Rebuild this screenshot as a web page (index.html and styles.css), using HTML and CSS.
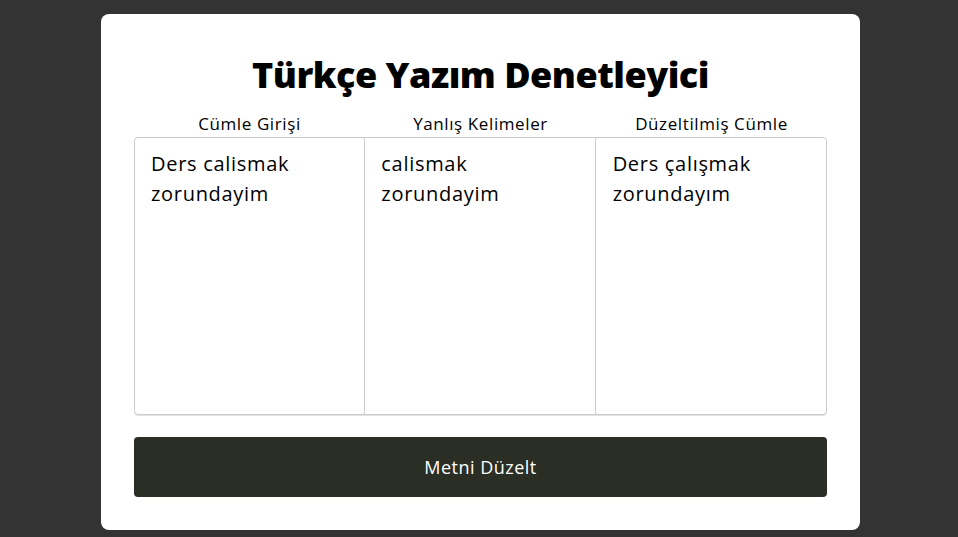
FILE: index.html
```html
<!DOCTYPE html>
<html lang="tr">
<head>
<meta charset="utf-8">
<title>Türkçe Yazım Denetleyici</title>
<link rel="stylesheet" href="styles.css">
</head>
<body>
<main class="card">
  <h1 class="title">Türkçe Yazım Denetleyici</h1>
  <div class="labels">
    <span class="label">Cümle Girişi</span>
    <span class="label">Yanlış Kelimeler</span>
    <span class="label">Düzeltilmiş Cümle</span>
  </div>
  <div class="panes">
    <div class="pane">Ders calismak zorundayim</div>
    <div class="pane">calismak zorundayim</div>
    <div class="pane">Ders çalışmak zorundayım</div>
  </div>
  <button class="btn" type="button">Metni Düzelt</button>
</main>
</body>
</html>
```
FILE: styles.css
```css
html, body {
  margin: 0;
  padding: 0;
}
body {
  background: #333333;
  font-family: "Open Sans", "DejaVu Sans", sans-serif;
  color: #000;
  min-height: 537px;
  display: flex;
  justify-content: center;
  align-items: flex-start;
  padding: 14px 0 0 3px;
  box-sizing: border-box;
}
.card {
  width: 759px;
  height: 516px;
  background: #fff;
  border-radius: 8px;
  padding: 33px;
  box-sizing: border-box;
  display: flex;
  flex-direction: column;
}
.title {
  margin: 8px 0 0;
  text-align: center;
  font-size: 36px;
  font-weight: 800;
  line-height: 40px;
  letter-spacing: -0.5px;
}
.labels {
  display: grid;
  grid-template-columns: 1fr 1fr 1fr;
  margin-top: 18px;
}
.label {
  text-align: center;
  font-size: 17px;
  line-height: 21px;
  letter-spacing: 0.6px;
}
.panes {
  display: grid;
  grid-template-columns: 1fr 1fr 1fr;
  height: 277px;
  border: 1px solid #cccccc;
  border-radius: 4px;
  box-shadow: 0 1px 0 #e2e2e2;
  margin-top: 3px;
}
.pane {
  padding: 11px 16px;
  font-size: 20px;
  line-height: 30px;
  letter-spacing: 0.7px;
  border-right: 1px solid #cccccc;
}
.pane:last-child {
  border-right: none;
  padding-left: 17px;
}
.btn {
  margin-top: 22px;
  height: 60px;
  border: none;
  border-radius: 4px;
  background: #2b2e25;
  color: #fff;
  font-family: inherit;
  font-size: 18px;
  letter-spacing: 0.5px;
}
```
